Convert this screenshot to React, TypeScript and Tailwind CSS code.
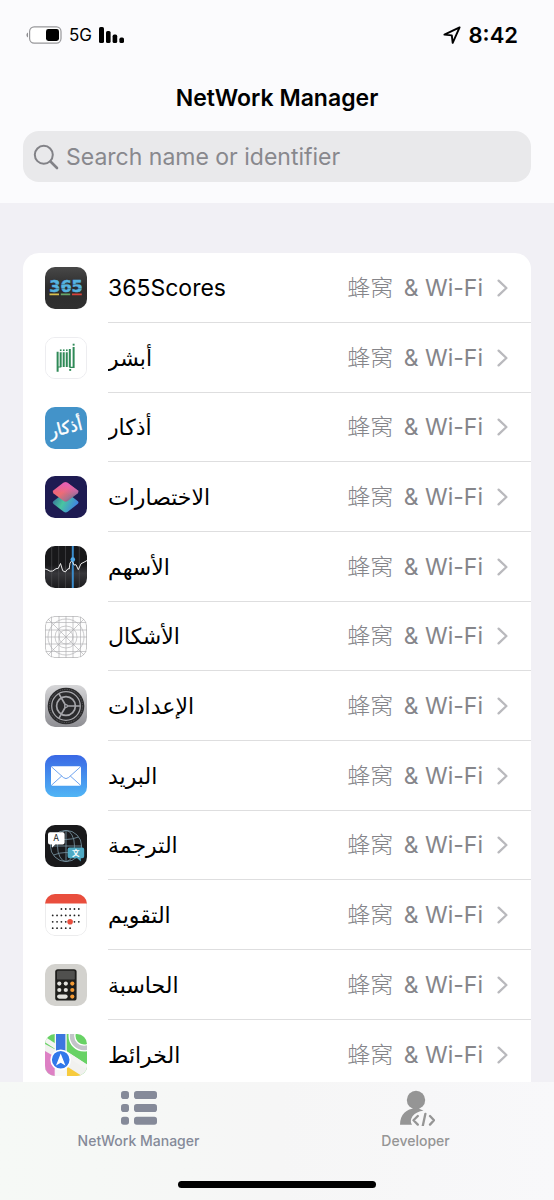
import type { ReactNode } from "react";

const CARD_ICON = "block size-[42px] shrink-0 overflow-hidden rounded-[10px]";

function AppIcon({ className = "", children }: { className?: string; children: ReactNode }) {
  return (
    <svg viewBox="0 0 42 42" className={`${CARD_ICON} ${className}`} aria-hidden="true">
      {children}
    </svg>
  );
}

function ScoresIcon() {
  return (
    <AppIcon>
      <defs>
        <linearGradient id="scores" x1="0" y1="0" x2="0" y2="1">
          <stop offset="0" stopColor="#484848" />
          <stop offset="0.5" stopColor="#2c2c2c" />
          <stop offset="1" stopColor="#303030" />
        </linearGradient>
      </defs>
      <rect width="42" height="42" fill="url(#scores)" />
      <text x="21" y="25.4" textAnchor="middle" fontSize="16" fontWeight="700" fill="#55b4e2" stroke="#55b4e2" strokeWidth="0.5" fontFamily="DejaVu Sans, sans-serif">
        365
      </text>
      <path d="M4 17.4h34M4 21.6h34" stroke="#2c2c2c" strokeWidth="0.35" />
      <path d="M4.5 27.4h9.5" stroke="#d9c04f" strokeWidth="1.8" />
      <path d="M15.8 27.4h9.4" stroke="#69a568" strokeWidth="1.8" />
      <path d="M27 27.4h9.8" stroke="#d5433c" strokeWidth="1.8" />
    </AppIcon>
  );
}

function AbsherIcon() {
  return (
    <AppIcon className="border border-[#ededf0]">
      <rect width="42" height="42" fill="#fff" />
      <g stroke="#2f8a57" strokeWidth="2.1" fill="none">
        <path d="M12.2 14.5V35.5M15.4 15v15.5M18.6 15v15.5M21.8 15v15.5M25 11.5v19M29 9.5v22" />
        <path d="M12 30.5h4M24.5 30.8h4.5" strokeWidth="1.2" />
      </g>
      <g fill="#2f8a57">
        <rect x="28" y="6" width="2" height="2" />
        <rect x="14.6" y="12" width="1.7" height="1.7" />
        <rect x="17.8" y="12" width="1.7" height="1.7" />
        <rect x="21" y="12" width="1.7" height="1.7" />
        <rect x="24.4" y="32.5" width="2" height="2" />
      </g>
    </AppIcon>
  );
}

function AzkarIcon() {
  return (
    <AppIcon>
      <rect width="42" height="42" fill="#4393c9" />
      <text x="20.5" y="26.5" textAnchor="middle" fontSize="17" fill="#fff" stroke="#fff" strokeWidth="0.4" fontFamily="DejaVu Sans, sans-serif" transform="rotate(-14 21 21)">
        أذكار
      </text>
    </AppIcon>
  );
}

function ShortcutsIcon() {
  return (
    <AppIcon>
      <defs>
        <linearGradient id="cutTop" x1="0" y1="0" x2="1" y2="1">
          <stop offset="0" stopColor="#e8558a" />
          <stop offset="0.45" stopColor="#ee6d73" />
          <stop offset="0.7" stopColor="#a8708f" />
          <stop offset="1" stopColor="#3d5f86" />
        </linearGradient>
        <linearGradient id="cutTint" x1="0.3" y1="1" x2="0.6" y2="0">
          <stop offset="0.4" stopColor="#e25fc0" stopOpacity="0" />
          <stop offset="1" stopColor="#e25fc0" />
        </linearGradient>
        <linearGradient id="cutBottom" x1="0" y1="0.2" x2="1" y2="0.6">
          <stop offset="0" stopColor="#356b9a" />
          <stop offset="0.45" stopColor="#49c5a0" />
          <stop offset="1" stopColor="#3f7eea" />
        </linearGradient>
      </defs>
      <rect width="42" height="42" fill="#1e1b52" />
      <path d="M18.8 17.3 8.600 25.1q-1.800 1.500 0 3L18.700 35.800q2 1.400 4 0L32.600 28q1.800-1.500 0-3L22.500 17.300Q20.600 16 18.800 17.300Z" fill="url(#cutBottom)" />
      <path d="M18.500 6.800 8.600 14.200q-1.800 1.600 0 3.200L18.700 25q2 1.400 4 0L32.600 17.400q1.800-1.600 0-3.200L22.500 6.800Q20.500 5.500 18.500 6.800Z" fill="url(#cutTop)" />
      <path d="M18.500 6.800 8.600 14.200q-1.800 1.600 0 3.200L18.700 25q2 1.400 4 0L32.600 17.400q1.800-1.600 0-3.200L22.500 6.800Q20.500 5.500 18.500 6.800Z" fill="url(#cutTint)" />
    </AppIcon>
  );
}

function StocksIcon() {
  return (
    <AppIcon>
      <defs>
        <linearGradient id="stocks" x1="0" y1="0" x2="0" y2="1">
          <stop offset="0.45" stopColor="#18181a" />
          <stop offset="0.65" stopColor="#37373b" />
          <stop offset="1" stopColor="#1b1b1d" />
        </linearGradient>
      </defs>
      <rect width="42" height="42" fill="url(#stocks)" />
      <path d="M6.7 0v42M13.7 0v42M20.5 0v42M34.3 0v42" stroke="#505054" strokeWidth="0.6" />
      <path d="M27.8 0v42" stroke="#3a8ccc" strokeWidth="2" />
      <path
        d="M0 23l2 .5 3 1.7 2.7-.2L11 22.7l2.3-.4 2.2-4.8 2.2 7.2 2.6 1.3L23 22.7l1.2.3L25 17l2-2.5 2 4.5 2-.3 2.3 5L36 17.7l3-1.5 3-1.7"
        fill="none"
        stroke="#ececec"
        strokeWidth="1"
        strokeLinejoin="round"
      />
      <circle cx="27.8" cy="13.5" r="2.3" fill="#4fa9ea" />
    </AppIcon>
  );
}

function ShapesIcon() {
  return (
    <AppIcon>
      <rect width="42" height="42" fill="#fdfdfd" />
      <g fill="none" stroke="#aaaaac" strokeWidth="0.6">
        <rect x="0.4" y="0.4" width="41.2" height="41.2" rx="9.6" stroke="#98989a" />
        <path d="M6.5 0v42M14 0v42M21 0v42M28 0v42M35.5 0v42" />
        <path d="M0 6.5h42M0 14h42M0 21h42M0 28h42M0 35.5h42" />
        <path d="M3 3l36 36M39 3L3 39" />
        <circle cx="21" cy="21" r="7" />
        <circle cx="21" cy="21" r="11" />
        <circle cx="21" cy="21" r="18" />
      </g>
    </AppIcon>
  );
}

function SettingsIcon() {
  return (
    <AppIcon>
      <defs>
        <linearGradient id="settings" x1="0" y1="0" x2="0" y2="1">
          <stop offset="0" stopColor="#d6d6d8" />
          <stop offset="1" stopColor="#8e8e93" />
        </linearGradient>
      </defs>
      <rect width="42" height="42" fill="url(#settings)" />
      <circle cx="21" cy="21" r="18.3" fill="#2b2b2d" />
      <g fill="none" stroke="#a5a5a9">
        <circle cx="21" cy="21" r="16.6" strokeWidth="1" strokeDasharray="0.6 1.2" stroke="#77777a" />
        <circle cx="21" cy="21" r="14.3" strokeWidth="1.3" />
        <circle cx="21" cy="21" r="9.4" strokeWidth="1.7" />
        <path d="M21 21h14M21 21l-7-12.1M21 21l-7 12.1" strokeWidth="1.7" />
      </g>
      <circle cx="21" cy="21" r="2" fill="#a5a5a9" />
      <circle cx="21" cy="21" r="0.8" fill="#2b2b2d" />
    </AppIcon>
  );
}

function MailIcon() {
  return (
    <AppIcon>
      <defs>
        <linearGradient id="mail" x1="0" y1="0" x2="0" y2="1">
          <stop offset="0" stopColor="#3a68e5" />
          <stop offset="1" stopColor="#50b5f5" />
        </linearGradient>
      </defs>
      <rect width="42" height="42" fill="url(#mail)" />
      <rect x="6" y="11.3" width="30" height="19.4" rx="1.6" fill="#fff" />
      <path d="M6.7 12l11.8 10.600q2.500 2 5 0L35.300 12M6.700 30l10-9M35.300 30l-10-9" fill="none" stroke="#4a8dec" strokeWidth="0.8" />
    </AppIcon>
  );
}

function TranslateIcon() {
  return (
    <AppIcon>
      <rect width="42" height="42" fill="#19191b" />
      <g fill="none" stroke="#718b98" strokeWidth="0.9">
        <circle cx="21" cy="21" r="15.6" />
        <ellipse cx="21" cy="21" rx="8.5" ry="15.6" />
        <path d="M21 5.4v31.2M5.4 21h31.2M8.5 12q12.5 5 25 0M8.5 30q12.5-5 25 0" />
      </g>
      <path d="M5 7.3h12.600q2 0 2 2v8.200q0 2-2 2h-7.400L7 22.800v-3.300H5q-2 0-2-2V9.300q0-2 2-2Z" fill="#fff" />
      <path d="M24.600 22.400h12.600q2 0 2 2v6.800q0 2-2 2h-1.400v3.400l-3.600-3.400h-7.600q-2 0-2-2v-6.800q0-2 2-2Z" fill="#4faac4" />
      <text x="11.3" y="16.4" textAnchor="middle" fontSize="8.5" fill="#222" fontFamily="Inter, sans-serif">
        A
      </text>
      <text x="30.8" y="30.6" textAnchor="middle" fontSize="7.5" fontWeight="700" fill="#fff" fontFamily="Noto Sans CJK SC, sans-serif">
        文
      </text>
    </AppIcon>
  );
}

const CALENDAR_ROWS = [
  { y: 15, from: 2, to: 6 },
  { y: 21.4, from: 0, to: 6 },
  { y: 27.8, from: 0, to: 6 },
  { y: 34.2, from: 0, to: 4 },
];

function CalendarIcon() {
  return (
    <AppIcon>
      <rect width="42" height="42" fill="#fff" />
      <g fill="#222">
        {CALENDAR_ROWS.flatMap(({ y, from, to }) =>
          Array.from({ length: to - from + 1 }, (_, i) => (
            <circle key={`${y}-${i}`} cx={7.7 + (from + i) * 4.35} cy={y} r="0.9" />
          )),
        )}
      </g>
      <circle cx="25.1" cy="27.8" r="2.8" fill="#e94e3d" />
      <rect x="0.4" y="0.4" width="41.2" height="41.2" rx="9.6" fill="none" stroke="#e4e4e6" strokeWidth="0.8" />
      <path d="M0 0h42v9.600H0z" fill="#e94e3d" />
    </AppIcon>
  );
}

function CalculatorIcon() {
  return (
    <AppIcon>
      <rect width="42" height="42" fill="#d3d2ce" />
      <rect x="10.2" y="5.2" width="21.4" height="31.4" rx="2.6" fill="#1e1e1c" />
      <rect x="12" y="6.8" width="17.8" height="8.8" rx="1.2" fill="#50504e" />
      <g fill="#e0e0dc">
        <circle cx="14.3" cy="19.6" r="2.1" />
        <circle cx="20.8" cy="19.6" r="2.1" />
        <circle cx="14.3" cy="26" r="2.1" />
        <circle cx="20.8" cy="26" r="2.1" />
        <rect x="12.1" y="30.5" width="10.6" height="4.2" rx="2.1" />
      </g>
      <g fill="#f39a35">
        <circle cx="27.3" cy="19.6" r="2.1" />
        <circle cx="27.3" cy="26" r="2.1" />
        <circle cx="27.3" cy="32.6" r="2.1" />
      </g>
    </AppIcon>
  );
}

function MapsIcon() {
  return (
    <AppIcon>
      <rect width="42" height="42" fill="#68d265" />
      <path d="M0 10 42 32v10H0Z" fill="#f1f1ef" />
      <path d="M0 17 12 24v18H0Z" fill="#dd80c4" />
      <path d="M22 32.500 37 42H22Z" fill="#f7cb3e" />
      <path d="M0 5.500 42 33" stroke="#f4f4f2" strokeWidth="4.500" />
      <path d="M21 11 42 26v4L21 16.500Z" fill="#68d265" />
      <circle cx="39" cy="2" r="12" fill="none" stroke="#fff" strokeWidth="7" />
      <circle cx="39" cy="2" r="12" fill="none" stroke="#c3c5c9" strokeWidth="4.4" />
      <path d="M9.7 0h12v42h-12Z" fill="#f7f7f7" />
      <path d="M11 0h9.4v24H11Z" fill="#3c76df" />
      <circle cx="15.7" cy="25.8" r="9.6" fill="#3178ea" stroke="#fff" strokeWidth="1.6" />
      <path d="M15.7 19.4 20.4 31.4 15.7 28.8 11 31.4Z" fill="#fff" />
    </AppIcon>
  );
}

const APPS = [
  { name: "365Scores", lang: "en", icon: <ScoresIcon /> },
  { name: "أبشر", lang: "ar", icon: <AbsherIcon /> },
  { name: "أذكار", lang: "ar", icon: <AzkarIcon /> },
  { name: "الاختصارات", lang: "ar", icon: <ShortcutsIcon /> },
  { name: "الأسهم", lang: "ar", icon: <StocksIcon /> },
  { name: "الأشكال", lang: "ar", icon: <ShapesIcon /> },
  { name: "الإعدادات", lang: "ar", icon: <SettingsIcon /> },
  { name: "البريد", lang: "ar", icon: <MailIcon /> },
  { name: "الترجمة", lang: "ar", icon: <TranslateIcon /> },
  { name: "التقويم", lang: "ar", icon: <CalendarIcon /> },
  { name: "الحاسبة", lang: "ar", icon: <CalculatorIcon /> },
  { name: "الخرائط", lang: "ar", icon: <MapsIcon /> },
];

function StatusBar() {
  return (
    <div className="flex h-[70px] items-center justify-between pr-9 pl-[26px]">
      <div className="flex items-center gap-[7px]">
        <svg viewBox="0 0 36 18" className="h-[18px] w-9" aria-hidden="true">
          <path d="M2 6.5Q.4 7.2.4 9T2 11.5Z" fill="#8f8f92" />
          <rect x="3.6" y="0.8" width="31.4" height="16.4" rx="4.6" fill="#fff" stroke="#97979a" strokeWidth="1.2" />
          <rect x="20" y="3" width="13" height="12" rx="2.4" fill="#000" />
        </svg>
        <span className="text-[17px] leading-6">5G</span>
        <svg viewBox="0 0 26 16" className="h-4 w-[26px]" aria-hidden="true">
          <rect x="0" y="0" width="5" height="16" rx="1.6" />
          <rect x="7" y="4" width="4.6" height="12" rx="1.6" />
          <rect x="13.6" y="7.6" width="4.6" height="8.4" rx="1.6" />
          <rect x="20.4" y="10.6" width="4.6" height="5.4" rx="1.6" />
        </svg>
      </div>
      <div className="flex items-center gap-2">
        <svg viewBox="0 0 18 18" className="size-[18px]" fill="none" stroke="#000" strokeWidth="1.9" strokeLinejoin="round" aria-hidden="true">
          <path d="M16.6 1.4 1.4 8.6l7.4.8.9 7.4Z" />
        </svg>
        <span className="text-[22px] leading-6 font-semibold">8:42</span>
      </div>
    </div>
  );
}

function AppRow({ name, lang, icon }: { name: string; lang: string; icon: ReactNode }) {
  return (
    <li className="group h-[70px] nth-[3n]:h-[69px]">
      <button type="button" className="flex h-full w-full items-center gap-[21px] pl-[22px] text-left">
        {icon}
        <span className="flex h-full min-w-0 flex-1 items-center border-b border-[#dededf] pr-[22px] group-last:border-b-0">
          <span className={`flex-1 truncate leading-9 ${lang === "ar" ? "text-[22px]" : "text-[23px]"}`}>
            <bdi lang={lang}>{name}</bdi>
          </span>
          <span className="text-[23px] leading-8 text-[#85858a]">
            <span className="mr-1 font-light">蜂窝</span> &amp; Wi-Fi
          </span>
          <svg viewBox="0 0 12 18" className="ml-[14px] h-[18px] w-3" fill="none" stroke="#b9b9bd" strokeWidth="2.3" strokeLinecap="round" strokeLinejoin="round" aria-hidden="true">
            <path d="M1.6 1.6 9.4 9l-7.800 7.400" />
          </svg>
        </span>
      </button>
    </li>
  );
}

function TabBar() {
  return (
    <nav className="flex h-[118px] shrink-0 flex-col items-center justify-between bg-linear-to-r from-[#f6f9f6] via-[#f6f6f6] to-[#f8f8fa] pt-2 pb-3">
      <div className="grid w-full grid-cols-2">
        <button type="button" aria-current="page" className="flex flex-col items-center gap-1 text-[#858a99]">
          <svg viewBox="0 0 38 36" className="h-9 w-[38px]" fill="currentColor" aria-hidden="true">
            <rect x="1" y="1" width="8" height="8" rx="2.8" />
            <rect x="14" y="1" width="23" height="8" rx="2.8" />
            <rect x="1" y="14" width="8" height="8" rx="2.8" />
            <rect x="14" y="14" width="23" height="8" rx="2.8" />
            <rect x="1" y="26.8" width="8" height="8" rx="2.8" />
            <rect x="14" y="26.8" width="23" height="8" rx="2.8" />
          </svg>
          <span className="text-sm leading-[22px] font-medium">NetWork Manager</span>
        </button>
        <button type="button" className="flex flex-col items-center gap-1 text-[#959595]">
          <svg viewBox="0 0 38 36" className="h-9 w-[38px]" aria-hidden="true">
            <circle cx="19" cy="10" r="9.2" fill="currentColor" />
            <path d="M3 34.800C3 24.500 9.500 18.600 18.500 18.600q4.700 0 8 2.200-7 .6-11 5.400-3 4.800-.5 8.600Z" fill="currentColor" />
            <path d="M20.800 26 16.500 30.300l4.300 4.300M28.400 23.800l-2.600 12M33 26l4 4.300-4 4.300" fill="none" stroke="currentColor" strokeWidth="2.300" strokeLinecap="round" strokeLinejoin="round" />
          </svg>
          <span className="text-sm leading-[22px] font-medium">Developer</span>
        </button>
      </div>
      <div className="h-[7px] w-[198px] rounded-full bg-black" />
    </nav>
  );
}

export default function App() {
  return (
    <div className="flex h-screen flex-col overflow-hidden bg-[#f1f0f5] font-[Inter,'DejaVu_Sans','Noto_Sans_CJK_SC',sans-serif] text-black">
      <header className="shrink-0 bg-[#fbfbfd] pb-[21px]">
        <StatusBar />
        <h1 className="pt-3 text-center text-[23px] leading-8 font-semibold">NetWork Manager</h1>
        <label className="mx-[23px] mt-[17px] flex h-[51px] items-center gap-[7px] rounded-2xl bg-[#e9e9eb] px-[10px]">
          <svg viewBox="0 0 26 26" className="size-[26px] shrink-0" fill="none" stroke="#828287" strokeWidth="2" strokeLinecap="round" aria-hidden="true">
            <circle cx="10.8" cy="10.8" r="9" />
            <path d="M17.5 17.5 24 24" strokeWidth="2.6" />
          </svg>
          <input
            type="search"
            aria-label="Search name or identifier"
            placeholder="Search name or identifier"
            className="min-w-0 flex-1 bg-transparent text-[23px] leading-8 outline-none placeholder:text-[#88888d]"
          />
        </label>
      </header>
      <main className="min-h-0 flex-1 overflow-hidden px-[23px] pt-[50px]">
        <ul className="overflow-hidden rounded-t-2xl bg-white">
          {APPS.map((app) => (
            <AppRow key={app.name} name={app.name} lang={app.lang} icon={app.icon} />
          ))}
        </ul>
      </main>
      <TabBar />
    </div>
  );
}
